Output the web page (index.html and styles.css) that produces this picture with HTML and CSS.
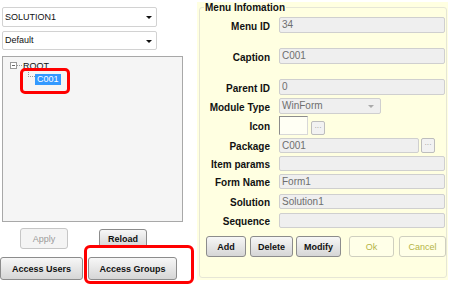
FILE: index.html
```html
<!DOCTYPE html>
<html lang="en">
<head>
    <meta charset="UTF-8">
    <title>Menu Editor</title>
    <link rel="stylesheet" href="styles.css">
</head>
<body>
    <div class="app">
        <div class="left">
            <div class="combo"><span>SOLUTION1</span><i class="arrow"></i></div>
            <div class="combo second"><span>Default</span><i class="arrow"></i></div>

            <div class="tree">
                <div class="node root"><span class="toggle"></span><span class="dash"></span>ROOT</div>
                <div class="node child"><span class="branch"></span><span class="selected">C001</span></div>
            </div>

            <div class="actions">
                <button class="btn apply" disabled>Apply</button>
                <button class="btn reload">Reload</button>
            </div>
            <div class="access">
                <button class="btn users">Access Users</button>
                <button class="btn groups">Access Groups</button>
            </div>

            <div class="mark mark-tree"></div>
            <div class="mark mark-groups"></div>
        </div>

        <div class="panel">
            <fieldset class="info">
                <legend>Menu Infomation</legend>
                <div class="form">
                    <div class="row"><label>Menu ID</label><div class="field">34</div></div>
                    <div class="row spaced"><label>Caption</label><div class="field">C001</div></div>
                    <div class="row spaced"><label>Parent ID</label><div class="field">0</div></div>
                    <div class="row"><label>Module Type</label><div class="field select">WinForm<i class="arrow light"></i></div></div>
                    <div class="row icon-row"><label>Icon</label><div class="icon-box"></div><span class="more">···</span></div>
                    <div class="row short"><label>Package</label><div class="field package">C001</div><span class="more">···</span></div>
                    <div class="row short"><label>Item params</label><div class="field"></div></div>
                    <div class="row short"><label>Form Name</label><div class="field">Form1</div></div>
                    <div class="row short solution"><label>Solution</label><div class="field">Solution1</div></div>
                    <div class="row short sequence"><label>Sequence</label><div class="field"></div></div>
                </div>
                <div class="buttons">
                    <button class="btn add">Add</button>
                    <button class="btn delete">Delete</button>
                    <button class="btn modify">Modify</button>
                    <button class="btn soft ok">Ok</button>
                    <button class="btn soft cancel">Cancel</button>
                </div>
            </fieldset>
        </div>
    </div>
</body>
</html>
```

FILE: styles.css
```css
body {
    margin: 0;
    background-color: #fff;
    font-family: "Liberation Sans", Arial, sans-serif;
    color: #111;
}
.app {
    display: flex;
    height: 285px;
}
.left {
    position: relative;
    width: 197px;
    padding: 7px 0 0 2px;
    box-sizing: border-box;
}
.combo {
    position: relative;
    width: 155px;
    height: 20px;
    box-sizing: border-box;
    border: 1px solid #d2d2d2;
    border-radius: 2px;
    background-color: #fff;
    font-size: 9px;
    line-height: 18px;
    padding-left: 2px;
}
.combo.second {
    height: 19px;
    line-height: 17px;
    margin-top: 4px;
}
.arrow {
    position: absolute;
    right: 4px;
    top: 50%;
    margin-top: -1px;
    border-left: 3px solid transparent;
    border-right: 3px solid transparent;
    border-top: 3px solid #111;
}
.arrow.light {
    border-top-color: #aaa;
    right: 6px;
}
.tree {
    width: 181px;
    height: 166px;
    margin-top: 6px;
    box-sizing: border-box;
    border: 1px solid #a8a8a8;
    background-color: #f5f5f5;
    padding: 3px 0 0 7px;
    font-size: 9px;
}
.node {
    display: flex;
    align-items: center;
    height: 11px;
}
.toggle {
    position: relative;
    width: 5px;
    height: 5px;
    border: 1px solid #9a9a9a;
    background-color: #fff;
}
.toggle::after {
    content: "";
    position: absolute;
    left: 1px;
    top: 2px;
    width: 3px;
    height: 1px;
    background-color: #666;
}
.dash {
    width: 5px;
    border-top: 1px dotted #999;
    margin-right: 1px;
}
.node.child {
    margin-top: 3px;
    padding-left: 18px;
    align-items: flex-end;
}
.branch {
    width: 7px;
    height: 9px;
    margin-bottom: 2px;
    border-left: 1px dotted #999;
    border-bottom: 1px dotted #999;
    box-sizing: border-box;
    align-self: flex-start;
    margin-top: -6px;
}
.selected {
    background-color: #3399ff;
    color: #fff;
    padding: 0 2px;
    line-height: 11px;
}
.btn {
    font-family: inherit;
    font-size: 9px;
    font-weight: bold;
    color: #111;
    padding: 0;
    border: 1px solid #8c8c8c;
    border-radius: 3px;
    background: linear-gradient(#f7f7f7, #e6e6e6 50%, #d6d6d6);
    box-sizing: border-box;
}
.btn[disabled] {
    color: #9a9a9a;
    font-weight: normal;
    border-color: #c6c6c6;
    background: #f4f4f4;
}
.actions {
    display: flex;
    align-items: flex-start;
    margin-top: 6px;
    padding-left: 18px;
}
.apply {
    width: 48px;
    height: 21px;
}
.reload {
    width: 48px;
    height: 19px;
    margin: 1px 0 0 31px;
}
.access {
    display: flex;
    margin: 8px 0 0 -2px;
}
.users {
    width: 83px;
    height: 23px;
}
.groups {
    width: 89px;
    height: 23px;
    margin-left: 5px;
}
.mark {
    position: absolute;
    border: 3px solid #f00;
    box-sizing: border-box;
    border-radius: 5px;
}
.mark-tree {
    left: 20px;
    top: 68px;
    width: 50px;
    height: 26px;
}
.mark-groups {
    left: 84px;
    top: 245px;
    width: 110px;
    height: 39px;
    border-radius: 6px;
}
.panel {
    width: 251px;
    height: 278px;
    margin-top: 2px;
    padding: 0 2px 2px;
    box-sizing: border-box;
    background-color: #ffffe1;
}
.info {
    margin: 0;
    padding: 0;
    height: 100%;
    box-sizing: border-box;
    border: 1px solid #e6e6d6;
    border-radius: 3px;
}
.info legend {
    margin-left: 4px;
    padding: 0 1px;
    font-size: 10px;
    font-weight: bold;
    line-height: 11px;
}
.form {
    display: flex;
    flex-direction: column;
    gap: 3px;
    padding-top: 4px;
}
.row {
    display: flex;
    align-items: center;
    height: 16px;
}
.row.spaced {
    margin-top: 12px;
}
.row.short {
    height: 15px;
}
.row.solution {
    margin-top: 2px;
}
.row.sequence {
    margin-top: 1px;
}
.row label {
    width: 70px;
    margin-right: 9px;
    text-align: right;
    font-size: 10px;
    font-weight: bold;
    padding-top: 2px;
}
.field {
    position: relative;
    width: 166px;
    height: 100%;
    box-sizing: border-box;
    border: 1px solid #cfcfcf;
    border-radius: 2px;
    background-color: #efefef;
    color: #6e6e6e;
    font-size: 10px;
    line-height: 14px;
    padding-left: 2px;
}
.short .field {
    line-height: 13px;
}
.field.select {
    width: 102px;
}
.field.package {
    width: 140px;
}
.icon-row {
    height: 19px;
    margin-top: -1px;
}
.icon-box {
    width: 29px;
    height: 19px;
    box-sizing: border-box;
    border: 1px solid #8c8c8c;
    border-right-color: #d8d8d8;
    border-bottom-color: #d8d8d8;
    background-color: #fffff4;
}
.more {
    width: 14px;
    height: 14px;
    box-sizing: border-box;
    margin-left: 3px;
    border: 1px solid #bdbdbd;
    border-radius: 2px;
    background-color: #f2f2f2;
    color: #888;
    font-size: 7px;
    line-height: 11px;
    text-align: center;
}
.icon-row .more {
    margin-top: 4px;
}
.package + .more {
    margin-left: 2px;
    height: 15px;
}
.buttons {
    display: flex;
    margin-top: 8px;
    padding-left: 6px;
}
.buttons .btn {
    height: 21px;
}
.add {
    width: 40px;
}
.delete {
    width: 43px;
    margin-left: 4px;
}
.modify {
    width: 45px;
    margin-left: 3px;
}
.btn.soft {
    color: #b4b446;
    font-weight: normal;
    border-color: #cfcfbf;
    background: #ffffe8;
}
.ok {
    width: 45px;
    margin-left: 8px;
}
.cancel {
    width: 47px;
    margin-left: 5px;
}
```
